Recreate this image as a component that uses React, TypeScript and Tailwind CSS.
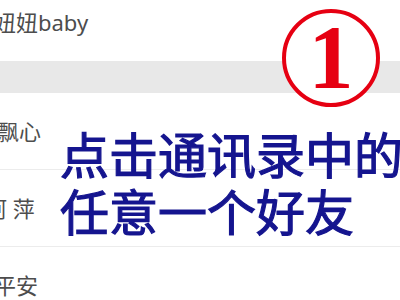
import React from "react";

const nameFont = { fontFamily: '"Noto Sans", "Noto Sans CJK SC", sans-serif' };

function Row({ name, offset, border }: { name: string; offset: string; border?: boolean }) {
  return (
    <div className={`h-[77px] flex items-center shrink-0 ${border ? "border-b border-[#ececec]" : ""}`}>
      <span className={`text-[22px] text-[#4d4d4d] whitespace-nowrap ${offset}`} style={nameFont}>
        {name}
      </span>
    </div>
  );
}

export default function App() {
  return (
    <div className="relative w-[400px] h-[300px] overflow-hidden bg-white">
      <div className="flex flex-col mt-[-16px]">
        <Row name="妞妞baby" offset="ml-[-6px]" />
        <div className="h-[32px] bg-[#e8e8e8] shrink-0" />
        <Row name="飘心" offset="ml-[-3px]" border />
        <Row name="阿 萍" offset="ml-[-15px]" border />
        <Row name="平安" offset="ml-[-6px]" />
      </div>

      <div className="absolute left-[282px] top-[9px] w-[98px] h-[98px] rounded-full border-[4px] border-[#e60012] bg-white flex items-center justify-center">
        <span
          className="text-[90px] leading-none font-bold text-[#e60012]"
          style={{ fontFamily: '"Liberation Serif", serif' }}
        >
          1
        </span>
      </div>

      <div
        className="absolute left-[60px] top-[124px] text-[49px] leading-[57px] font-normal text-[#15158f] whitespace-nowrap [-webkit-text-stroke:1.2px_#15158f]"
        style={{ fontFamily: '"Noto Sans CJK SC", sans-serif' }}
      >
        <div>点击通讯录中的</div>
        <div>任意一个好友</div>
      </div>
    </div>
  );
}
